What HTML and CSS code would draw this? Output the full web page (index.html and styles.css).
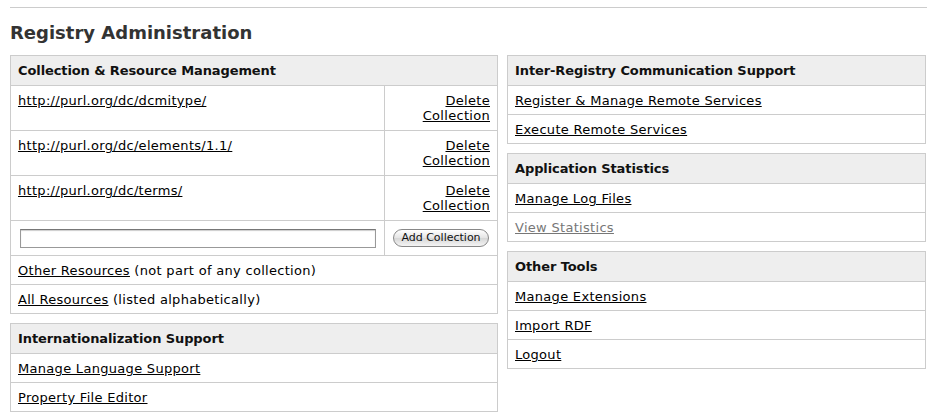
FILE: index.html
```html
<!DOCTYPE html>
<html>
<head>
<meta charset="utf-8">
<link rel="stylesheet" href="styles.css">
</head>
<body>
<hr class="rule">
<h1 class="title">Registry Administration</h1>
<div class="columns">
  <div class="col left">
    <div class="panel">
      <div class="phead">Collection &amp; Resource Management</div>
      <div class="coll">
        <div class="c1"><a href="#">http://purl.org/dc/dcmitype/</a></div>
        <div class="c2"><a href="#">Delete<br>Collection</a></div>
        <div class="c1"><a href="#">http://purl.org/dc/elements/1.1/</a></div>
        <div class="c2"><a href="#">Delete<br>Collection</a></div>
        <div class="c1"><a href="#">http://purl.org/dc/terms/</a></div>
        <div class="c2"><a href="#">Delete<br>Collection</a></div>
        <div class="c1 inrow"><input class="field" type="text"></div>
        <div class="c2 inrow"><button class="btn">Add Collection</button></div>
      </div>
      <div class="row"><a href="#">Other Resources</a> (not part of any collection)</div>
      <div class="row last"><a href="#">All Resources</a> (listed alphabetically)</div>
    </div>
    <div class="panel">
      <div class="phead">Internationalization Support</div>
      <div class="row"><a href="#">Manage Language Support</a></div>
      <div class="row last"><a href="#">Property File Editor</a></div>
    </div>
  </div>
  <div class="col right">
    <div class="panel">
      <div class="phead">Inter-Registry Communication Support</div>
      <div class="row"><a href="#">Register &amp; Manage Remote Services</a></div>
      <div class="row last"><a href="#">Execute Remote Services</a></div>
    </div>
    <div class="panel">
      <div class="phead">Application Statistics</div>
      <div class="row"><a href="#">Manage Log Files</a></div>
      <div class="row last"><a href="#" class="dim">View Statistics</a></div>
    </div>
    <div class="panel">
      <div class="phead">Other Tools</div>
      <div class="row"><a href="#">Manage Extensions</a></div>
      <div class="row"><a href="#">Import RDF</a></div>
      <div class="row last"><a href="#">Logout</a></div>
    </div>
  </div>
</div>
</body>
</html>
```
FILE: styles.css
```css
html, body {
  margin: 0;
  padding: 0;
  background: #fff;
}
body {
  font-family: "DejaVu Sans", Verdana, sans-serif;
  font-size: 13px;
  line-height: 15px;
  letter-spacing: 0.3px;
  color: #000;
  padding: 0 9px 0 10px;
}
.rule {
  margin: 7px 0 0 0;
  height: 0;
  border: 0;
  border-top: 1px solid #ccc;
  width: 917px;
}
.title {
  margin: 14px 0 11px 0;
  font-size: 18px;
  line-height: 22px;
  font-weight: bold;
  letter-spacing: 0;
  color: #333;
}
.columns {
  display: flex;
  gap: 9px;
  align-items: flex-start;
}
.col {
  display: flex;
  flex-direction: column;
  gap: 9px;
}
.left { width: 488px; }
.right { width: 419px; }
.panel {
  border: 1px solid #ccc;
  box-sizing: border-box;
}
.phead {
  background: #eee;
  font-weight: bold;
  letter-spacing: -0.1px;
  color: #111;
  height: 29px;
  line-height: 29px;
  padding: 0 7px;
  border-bottom: 1px solid #ccc;
}
.row {
  padding: 7px 7px 6px;
  border-bottom: 1px solid #ccc;
}
.row.last { border-bottom: 0; }
a { color: #000; text-decoration: underline; }
a.dim { color: #777; }
.coll {
  display: grid;
  grid-template-columns: 373px 113px;
}
.c1, .c2 {
  padding: 7px 7px 7px;
  border-bottom: 1px solid #ccc;
}
.c2 {
  border-left: 1px solid #ccc;
  text-align: right;
}
.inrow {
  padding: 8px 7px 8px 9px;
  height: 18px;
  display: flex;
  align-items: center;
}
.c2.inrow { justify-content: center; padding: 8px 7px; }
.field {
  box-sizing: border-box;
  width: 356px;
  height: 19px;
  border: 1px solid #999;
  border-top-color: #777;
  box-shadow: inset 0 1px 1px #ccc;
  margin: 0;
  padding: 0;
}
.btn {
  box-sizing: border-box;
  width: 96px;
  height: 18px;
  border: 1px solid #888;
  border-radius: 9px;
  background: linear-gradient(#fff, #e4e4e4 50%, #d6d6d6 51%, #f4f4f4);
  font-family: "DejaVu Sans", Verdana, sans-serif;
  font-size: 11px;
  line-height: 14px;
  letter-spacing: 0;
  color: #111;
  padding: 0;
  margin: 0;
}
```
